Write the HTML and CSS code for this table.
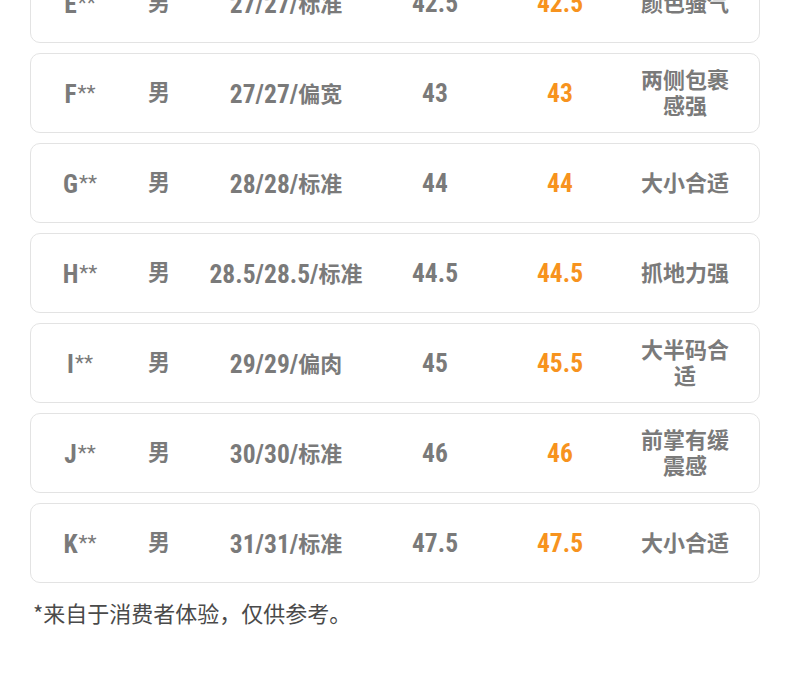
FILE: index.html
```html
<!DOCTYPE html>
<html lang="zh-CN">
<head>
<meta charset="utf-8">
<title>尺码推荐</title>
<link rel="stylesheet" href="styles.css">
</head>
<body>
<div class="page">
  <div class="list">
    <div class="card"><div class="c name">E<span class="ast">**</span></div><div class="c sex">男</div><div class="c num">27/27/<span class="cn">标准</span></div><div class="c num">42.5</div><div class="c num rec">42.5</div><div class="c note">颜色骚气</div></div>
    <div class="card"><div class="c name">F<span class="ast">**</span></div><div class="c sex">男</div><div class="c num">27/27/<span class="cn">偏宽</span></div><div class="c num">43</div><div class="c num rec">43</div><div class="c note">两侧包裹感强</div></div>
    <div class="card"><div class="c name">G<span class="ast">**</span></div><div class="c sex">男</div><div class="c num">28/28/<span class="cn">标准</span></div><div class="c num">44</div><div class="c num rec">44</div><div class="c note">大小合适</div></div>
    <div class="card"><div class="c name">H<span class="ast">**</span></div><div class="c sex">男</div><div class="c num">28.5/28.5/<span class="cn">标准</span></div><div class="c num">44.5</div><div class="c num rec">44.5</div><div class="c note">抓地力强</div></div>
    <div class="card"><div class="c name">I<span class="ast">**</span></div><div class="c sex">男</div><div class="c num">29/29/<span class="cn">偏肉</span></div><div class="c num">45</div><div class="c num rec">45.5</div><div class="c note">大半码合适</div></div>
    <div class="card"><div class="c name">J<span class="ast">**</span></div><div class="c sex">男</div><div class="c num">30/30/<span class="cn">标准</span></div><div class="c num">46</div><div class="c num rec">46</div><div class="c note">前掌有缓震感</div></div>
    <div class="card"><div class="c name">K<span class="ast">**</span></div><div class="c sex">男</div><div class="c num">31/31/<span class="cn">标准</span></div><div class="c num">47.5</div><div class="c num rec">47.5</div><div class="c note">大小合适</div></div>
  </div>
  <p class="foot">*来自于消费者体验，仅供参考。</p>
</div>
</body>
</html>
```
FILE: styles.css
```css
html, body {
  margin: 0;
  padding: 0;
  background: #ffffff;
}
.page {
  width: 790px;
  height: 685px;
  overflow: hidden;
}
.list {
  margin: -37px 30px 0 30px;
  display: flex;
  flex-direction: column;
  gap: 10px;
}
.card {
  box-sizing: border-box;
  height: 80px;
  border: 1px solid #e3e3e3;
  border-radius: 10px;
  display: grid;
  grid-template-columns: 98px 60px 194px 104px 146px 104px;
  align-items: center;
  color: #7a7a7a;
  font-weight: 700;
}
.c {
  text-align: center;
  white-space: nowrap;
}
.name, .num {
  font-family: Roboto, "Noto Sans CJK SC", sans-serif;
  font-stretch: 75%;
  font-size: 25.5px;
  line-height: 30px;
}
.ast {
  font-size: 21px;
  font-weight: 400;
  vertical-align: 3px;
  margin-left: 1px;
}
.sex, .cn, .note {
  font-family: "Noto Sans CJK SC", sans-serif;
  font-stretch: 100%;
  font-size: 22px;
  font-weight: 700;
}
.cn {
  vertical-align: 1px;
}
.sex {
  line-height: 30px;
  padding-bottom: 6px;
}
.rec {
  color: #f7931e;
}
.note {
  line-height: 26px;
  white-space: normal;
  width: 88px;
  justify-self: center;
  padding-bottom: 4px;
}
.foot {
  margin: 13px 0 0 33px;
  font-family: "Noto Sans CJK SC", sans-serif;
  font-size: 22px;
  line-height: 32px;
  color: #4a4a4a;
}
```
